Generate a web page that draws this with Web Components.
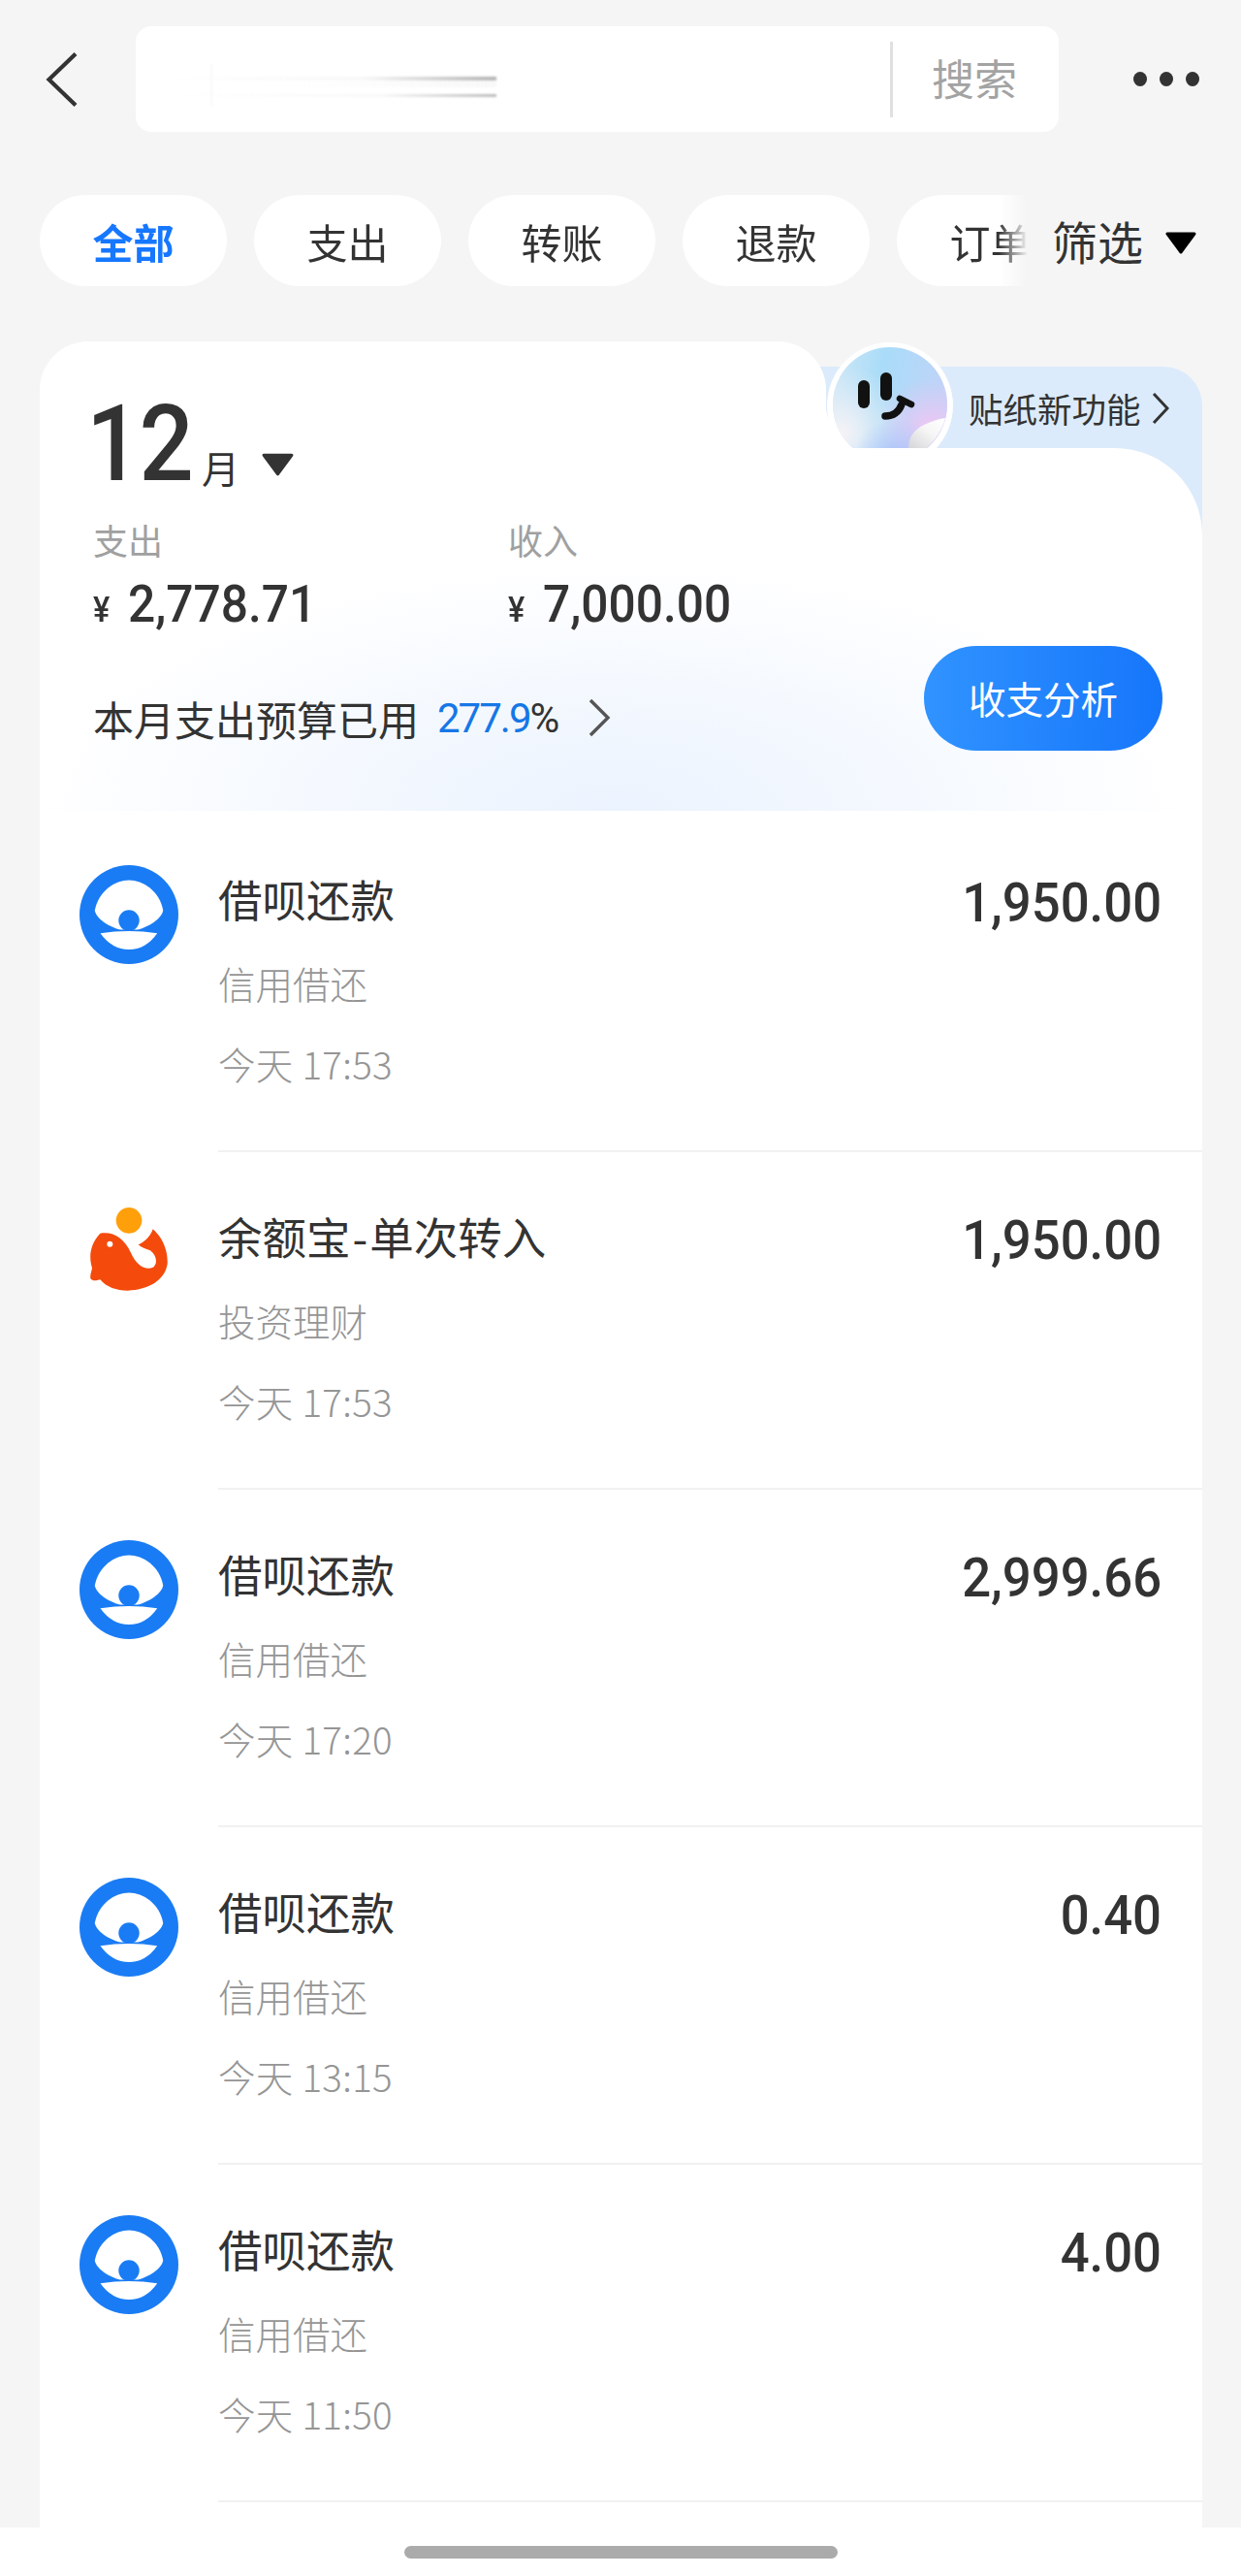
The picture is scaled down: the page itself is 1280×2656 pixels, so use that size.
<!DOCTYPE html>
<html lang="zh-CN">
<head>
<meta charset="utf-8">
<title>账单</title>
<style>
  html, body { margin: 0; padding: 0; }
  body {
    width: 1280px; height: 2656px; overflow: hidden; position: relative;
    background: #f5f5f5; color: #333;
    font-family: "Noto Sans CJK SC", "Noto Sans", sans-serif;
  }
</style>
</head>
<body>
<pay-topbar></pay-topbar>

<pay-chips>
  <pay-chip active>全部</pay-chip>
  <pay-chip>支出</pay-chip>
  <pay-chip>转账</pay-chip>
  <pay-chip>退款</pay-chip>
  <pay-chip>订单</pay-chip>
</pay-chips>

<pay-month-card></pay-month-card>

<pay-list>
  <pay-row icon="jiebei"><span slot="title">借呗还款</span><span slot="sub">信用借还</span><span slot="time">今天 17:53</span><span slot="amount">1,950.00</span></pay-row>
  <pay-row icon="fish"><span slot="title">余额宝<span style="margin:0 2px">-</span>单次转入</span><span slot="sub">投资理财</span><span slot="time">今天 17:53</span><span slot="amount">1,950.00</span></pay-row>
  <pay-row icon="jiebei"><span slot="title">借呗还款</span><span slot="sub">信用借还</span><span slot="time">今天 17:20</span><span slot="amount">2,999.66</span></pay-row>
  <pay-row icon="jiebei"><span slot="title">借呗还款</span><span slot="sub">信用借还</span><span slot="time">今天 13:15</span><span slot="amount">0.40</span></pay-row>
  <pay-row icon="jiebei"><span slot="title">借呗还款</span><span slot="sub">信用借还</span><span slot="time">今天 11:50</span><span slot="amount">4.00</span></pay-row>
</pay-list>

<pay-homebar></pay-homebar>

<script>
const TRIANGLE = (w, h, fill) => `<svg width="${w}" height="${h}" viewBox="0 0 34 23"><path d="M3 2h28L17 21z" fill="${fill}" stroke="${fill}" stroke-width="3" stroke-linejoin="round"/></svg>`;

class PayTopbar extends HTMLElement {
    constructor(){
        super();
        this.attachShadow({mode:'open'});
        this.shadowRoot.innerHTML = `
        <style>
        :host{
            display:flex;
            align-items:center;
            height:109px;
            padding:27px 42px 0 46px;
        }
        .back{ width:34px; height:58px; flex:none; margin-right:60px; display:block; }
        .search{
            flex:none;
            width:952px;
            height:109px;
            box-sizing:border-box;
            background:#fff;
            border-radius:16px;
            display:flex;
            align-items:center;
            position:relative;
        }
        /* the blurred-out search term */
        .smear{
            position:absolute;
            left:30px; top:42px;
            width:342px; height:38px;
            filter:blur(.8px);
            background:
              linear-gradient(90deg, transparent, #f8f8f8 60%, #b5b5b5) 0 10px/100% 4px no-repeat,
              linear-gradient(90deg, transparent, #f9f9f9 65%, #bdbdbd) 0 28px/100% 3px no-repeat,
              linear-gradient(90deg, transparent 40%, #f8f8f8) 0 15px/100% 6px no-repeat;
        }
        .smear::before{
            content:"";
            position:absolute;
            left:47px; top:-3px;
            width:3px; height:44px;
            background:#fafafa;
        }
        .rule{ margin-left:778px; width:3px; height:78px; background:#e0e0e0; flex:none; }
        .label{ margin:-3px 0 0 40px; font-size:44px; line-height:60px; color:#a3a3a3; white-space:nowrap; }
        .more{ margin-left:77px; flex:none; display:flex; gap:13px; }
        .more i{ width:14px; height:15px; border-radius:50%; background:#333; display:block; }
        </style>
        <svg class="back" viewBox="0 0 34 58"><path d="M32 2.5 4.5 29 32 55.5" fill="none" stroke="#333" stroke-width="4.2"/></svg>
        <div class="search">
            <div class="smear"></div>
            <div class="rule"></div>
            <div class="label">搜索</div>
        </div>
        <div class="more"><i></i><i></i><i></i></div>
        `;
    }
}

class PayChips extends HTMLElement {
    constructor(){
        super();
        this.attachShadow({mode:'open'});
        this.shadowRoot.innerHTML = `
        <style>
        :host{
            display:flex;
            align-items:center;
            margin-top:65px;
            height:94px;
        }
        .track{
            flex:none;
            width:1060px;
            box-sizing:border-box;
            padding-left:41px;
            display:flex;
            gap:28px;
            overflow:hidden;
            -webkit-mask-image:linear-gradient(90deg,#000 1030px,transparent 1060px);
            mask-image:linear-gradient(90deg,#000 1030px,transparent 1060px);
        }
        .filter{
            margin-left:25px;
            display:flex;
            align-items:center;
            gap:22px;
            font-size:47px;
            line-height:60px;
            color:#333;
            white-space:nowrap;
        }
        svg{ display:block; margin-top:4px; }
        </style>
        <div class="track"><slot></slot></div>
        <div class="filter">筛选${TRIANGLE(34, 23, '#000')}</div>
        `;
    }
}

class PayChip extends HTMLElement {
    constructor(){
        super();
        this.attachShadow({mode:'open'});
        this.shadowRoot.innerHTML = `
        <style>
        :host{
            flex:none;
            display:flex;
            align-items:center;
            justify-content:center;
            width:193px;
            height:94px;
            border-radius:47px;
            background:#fff;
            font-size:42px;
            color:#333;
            white-space:nowrap;
        }
        :host([active]){ color:#1677ff; font-weight:700; }
        </style>
        <slot></slot>
        `;
    }
}

class PayMonthCard extends HTMLElement {
    constructor(){
        super();
        this.attachShadow({mode:'open'});
        this.shadowRoot.innerHTML = `
        <style>
        :host{
            display:block;
            position:relative;
            margin:57px 40px 0 41px;
            height:484px;
            box-sizing:border-box;
            padding:0 41px 0 56px;
        }
        .banner{
            position:absolute;
            left:760px; right:0; top:26px;
            height:240px;
            background:#dcebfb;
            border-radius:0 40px 0 0;
        }
        .shape{
            position:absolute;
            inset:0;
            background:
              radial-gradient(ellipse 600px 260px at 590px 100%, #ebf3fe 0, rgba(235,243,254,.58) 45%, rgba(235,243,254,0) 100%),
              #fff;
            clip-path:path("M0 50A50 50 0 0 1 50 0H761A50 50 0 0 1 811 50V70Q815 95 840 110H1109A90 90 0 0 1 1199 200V484H0Z");
        }
        .sticker{
            position:absolute;
            left:812px; top:1px;
            width:130px; height:109px;
            overflow:hidden;
        }
        .tip{
            position:absolute;
            left:958px; top:44px;
            display:flex;
            align-items:center;
            gap:11px;
            font-size:35.5px;
            line-height:50px;
            color:#333;
            white-space:nowrap;
        }
        .content{ position:relative; margin-left:-1px; }
        .month{
            display:flex;
            align-items:flex-end;
            height:145px;
        }
        .num{
            font-family:Roboto,sans-serif;
            font-weight:500;
            font-size:110px;
            line-height:108px;
            letter-spacing:-2px;
            display:inline-block;
            position:relative;
            top:15px;
            left:-7px;
            transform:scaleX(.9);
            transform-origin:left bottom;
            width:112px;
        }
        .unit{ font-size:39px; line-height:46px; position:relative; top:7px; }
        .caret{ margin:0 0 0 22px; display:block; position:relative; top:-1px; }
        .stats{
            display:grid;
            grid-template-columns:428px 1fr;
            margin-top:37px;
        }
        .k{ font-size:36px; line-height:44px; color:#a0a0a0; }
        .v{
            display:flex;
            align-items:baseline;
            margin-top:17px;
            height:56px;
            font-family:Roboto,sans-serif;
            font-weight:500;
            color:#333;
        }
        .v small{ font-size:37px; width:36px; flex:none; font-weight:500; transform:scaleX(.88); transform-origin:left center; }
        .v b{
            font-weight:500;
            font-size:54px;
            line-height:56px;
            display:inline-block;
            transform:scaleX(.92);
            transform-origin:left center;
        }
        .foot{
            display:flex;
            align-items:flex-end;
            justify-content:space-between;
            margin-top:15px;
        }
        .budget{
            display:flex;
            align-items:center;
            height:58px;
            margin-bottom:5px;
            font-size:42px;
            color:#333;
            white-space:nowrap;
        }
        .budget em{ font-style:normal; color:#1677e6; margin-left:19px; font-family:Roboto,sans-serif; font-weight:400; letter-spacing:-2px; }
        .budget span{ font-family:Roboto,sans-serif; }
        .budget svg{ margin-left:29px; display:block; }
        .btn{
            width:246px;
            height:108px;
            padding-bottom:3px;
            box-sizing:border-box;
            border-radius:54px;
            background:linear-gradient(90deg,#3093ff,#1676fb);
            color:#fff;
            font-size:38.5px;
            display:flex;
            align-items:center;
            justify-content:center;
            white-space:nowrap;
        }
        </style>
        <div class="banner"></div>
        <div class="shape"></div>
        <div class="tip">贴纸新功能<svg width="18" height="34" viewBox="0 0 18 34"><path d="M2 2l14 15L2 32" fill="none" stroke="#333" stroke-width="3"/></svg></div>
        <svg class="sticker" viewBox="0 0 130 109">
            <defs>
                <linearGradient id="st1" x1="0" y1="0" x2="1" y2="0.2">
                    <stop offset="0" stop-color="#cfe7f7"/><stop offset=".45" stop-color="#a9dcf8"/><stop offset="1" stop-color="#bfd3f8"/>
                </linearGradient>
                <radialGradient id="st2" cx=".85" cy=".72" r=".45">
                    <stop offset="0" stop-color="#efc6f3"/><stop offset="1" stop-color="#e9c8f5" stop-opacity="0"/>
                </radialGradient>
                <radialGradient id="st3" cx=".55" cy="1" r=".38">
                    <stop offset="0" stop-color="#a8bffa"/><stop offset="1" stop-color="#b0c4fa" stop-opacity="0"/>
                </radialGradient>
                <radialGradient id="st4" cx=".08" cy=".75" r=".6">
                    <stop offset="0" stop-color="#f6f3f6"/><stop offset="1" stop-color="#f4f2f6" stop-opacity="0"/>
                </radialGradient>
                <linearGradient id="st5" x1="0" y1="1" x2="1" y2="0">
                    <stop offset="0" stop-color="#d4d5d8"/><stop offset=".55" stop-color="#f6f6f6"/><stop offset="1" stop-color="#fff"/>
                </linearGradient>
            </defs>
            <circle cx="65" cy="65" r="65" fill="#fff"/>
            <circle cx="65" cy="64" r="59" fill="url(#st1)"/>
            <circle cx="65" cy="64" r="59" fill="url(#st4)"/>
            <circle cx="65" cy="64" r="59" fill="url(#st2)"/>
            <circle cx="65" cy="64" r="59" fill="url(#st3)"/>
            <rect x="32" y="39" width="12" height="29" rx="6" fill="#111"/>
            <rect x="55" y="31" width="12" height="29" rx="6" fill="#111"/>
            <path d="M60 76C68 76 74 72 77 64" fill="none" stroke="#111" stroke-width="7.5" stroke-linecap="round"/>
            <path d="M75 58 87 64" fill="none" stroke="#111" stroke-width="6.5" stroke-linecap="round"/>
            <path d="M84 109C84 97 90 90 100 85 107 82 114 79 122 78 119 90 112 100 103 109Z" fill="url(#st5)"/>
        </svg>
        <div class="content">
            <div class="month">
                <span class="num">12</span><span class="unit">月</span>
                <span class="caret">${TRIANGLE(35, 24, '#333')}</span>
            </div>
            <div class="stats">
                <div><div class="k">支出</div><div class="v"><small>¥</small><b>2,778.71</b></div></div>
                <div><div class="k">收入</div><div class="v"><small>¥</small><b>7,000.00</b></div></div>
            </div>
            <div class="foot">
                <div class="budget">本月支出预算已用<em>277.9</em><span>%</span>
                    <svg width="24" height="40" viewBox="0 0 24 40"><path d="M3 2l18 18L3 38" fill="none" stroke="#555" stroke-width="3.4"/></svg>
                </div>
                <div class="btn">收支分析</div>
            </div>
        </div>
        `;
    }
}

class PayList extends HTMLElement {
    constructor(){
        super();
        this.attachShadow({mode:'open'});
        this.shadowRoot.innerHTML = `
        <style>
        :host{
            display:block;
            margin:0 40px 0 41px;
            padding-top:4px;
            background:#fff;
            height:1821px;
            overflow:hidden;
        }
        </style>
        <slot></slot>
        `;
    }
}

const ICONS = {
    jiebei: `<svg viewBox="66 66 304 304">
        <circle cx="218" cy="218" r="152" fill="#1a7cf4"/>
        <path d="M113 205C125 145 175 112 218 112S312 145 323 205C318 230 280 255 245 264H191C155 255 118 230 113 205Z" fill="#fff"/>
        <circle cx="218" cy="236" r="32" fill="#1a7cf4"/>
        <path d="M130 275Q218 262 305 275 270 325 218 325T130 275Z" fill="#fff"/>
    </svg>`,
    fish: `<svg viewBox="66 60 306 306">
        <circle cx="219" cy="115" r="40" fill="#ff9f0a"/>
        <path d="M130 155C170 148 205 170 225 215 240 250 265 268 290 262 308 255 308 225 285 208 270 202 258 200 248 190 268 180 285 165 293 142 325 170 340 210 338 250 330 300 280 330 215 332 180 332 150 322 130 298 120 300 108 305 100 295 98 280 105 270 105 262 95 230 97 190 130 155Z" fill="#f44a0b"/>
        <circle cx="160" cy="188" r="9" fill="#fff"/>
    </svg>`
};

class PayRow extends HTMLElement {
    constructor(){
        super();
        this.attachShadow({mode:'open'});
        this.shadowRoot.innerHTML = `
        <style>
        :host{
            display:flex;
            height:348px;
            box-sizing:border-box;
        }
        .icon{ flex:none; width:102px; height:102px; margin:52px 41px 0 41px; }
        .icon svg{ display:block; width:102px; height:102px; }
        .body{
            flex:1;
            display:flex;
            justify-content:space-between;
            border-bottom:2px solid #f1f1f1;
            padding:0 42px 0 0;
        }
        .title{ font-size:45.5px; line-height:60px; margin-top:56px; color:#333; white-space:nowrap; }
        .sub{ font-size:38.5px; line-height:50px; margin-top:32px; color:#959595; white-space:nowrap; font-weight:300; }
        .time{ font-size:38.5px; line-height:50px; margin-top:33px; color:#959595; white-space:nowrap; font-weight:300; letter-spacing:.3px; }
        .amount{
            font-family:Roboto,sans-serif;
            font-weight:500;
            font-size:56px;
            line-height:60px;
            margin-top:61px;
            color:#333;
            transform:scaleX(.94);
            transform-origin:right center;
            white-space:nowrap;
        }
        </style>
        <div class="icon"></div>
        <div class="body">
            <div>
                <div class="title"><slot name="title"></slot></div>
                <div class="sub"><slot name="sub"></slot></div>
                <div class="time"><slot name="time"></slot></div>
            </div>
            <div class="amount"><slot name="amount"></slot></div>
        </div>
        `;
    }

    connectedCallback(){
        this.shadowRoot.querySelector('.icon').innerHTML = ICONS[this.getAttribute('icon')] || '';
    }
}

class PayHomebar extends HTMLElement {
    constructor(){
        super();
        this.attachShadow({mode:'open'});
        this.shadowRoot.innerHTML = `
        <style>
        :host{
            display:flex;
            justify-content:center;
            position:absolute;
            left:0; right:0; bottom:0;
            height:50px;
            background:#fff;
        }
        i{ display:block; width:447px; height:13px; margin-top:19px; border-radius:7px; background:#ababab; }
        </style>
        <i></i>
        `;
    }
}

customElements.define('pay-topbar', PayTopbar);
customElements.define('pay-chips', PayChips);
customElements.define('pay-chip', PayChip);
customElements.define('pay-month-card', PayMonthCard);
customElements.define('pay-list', PayList);
customElements.define('pay-row', PayRow);
customElements.define('pay-homebar', PayHomebar);
</script>
</body>
</html>
